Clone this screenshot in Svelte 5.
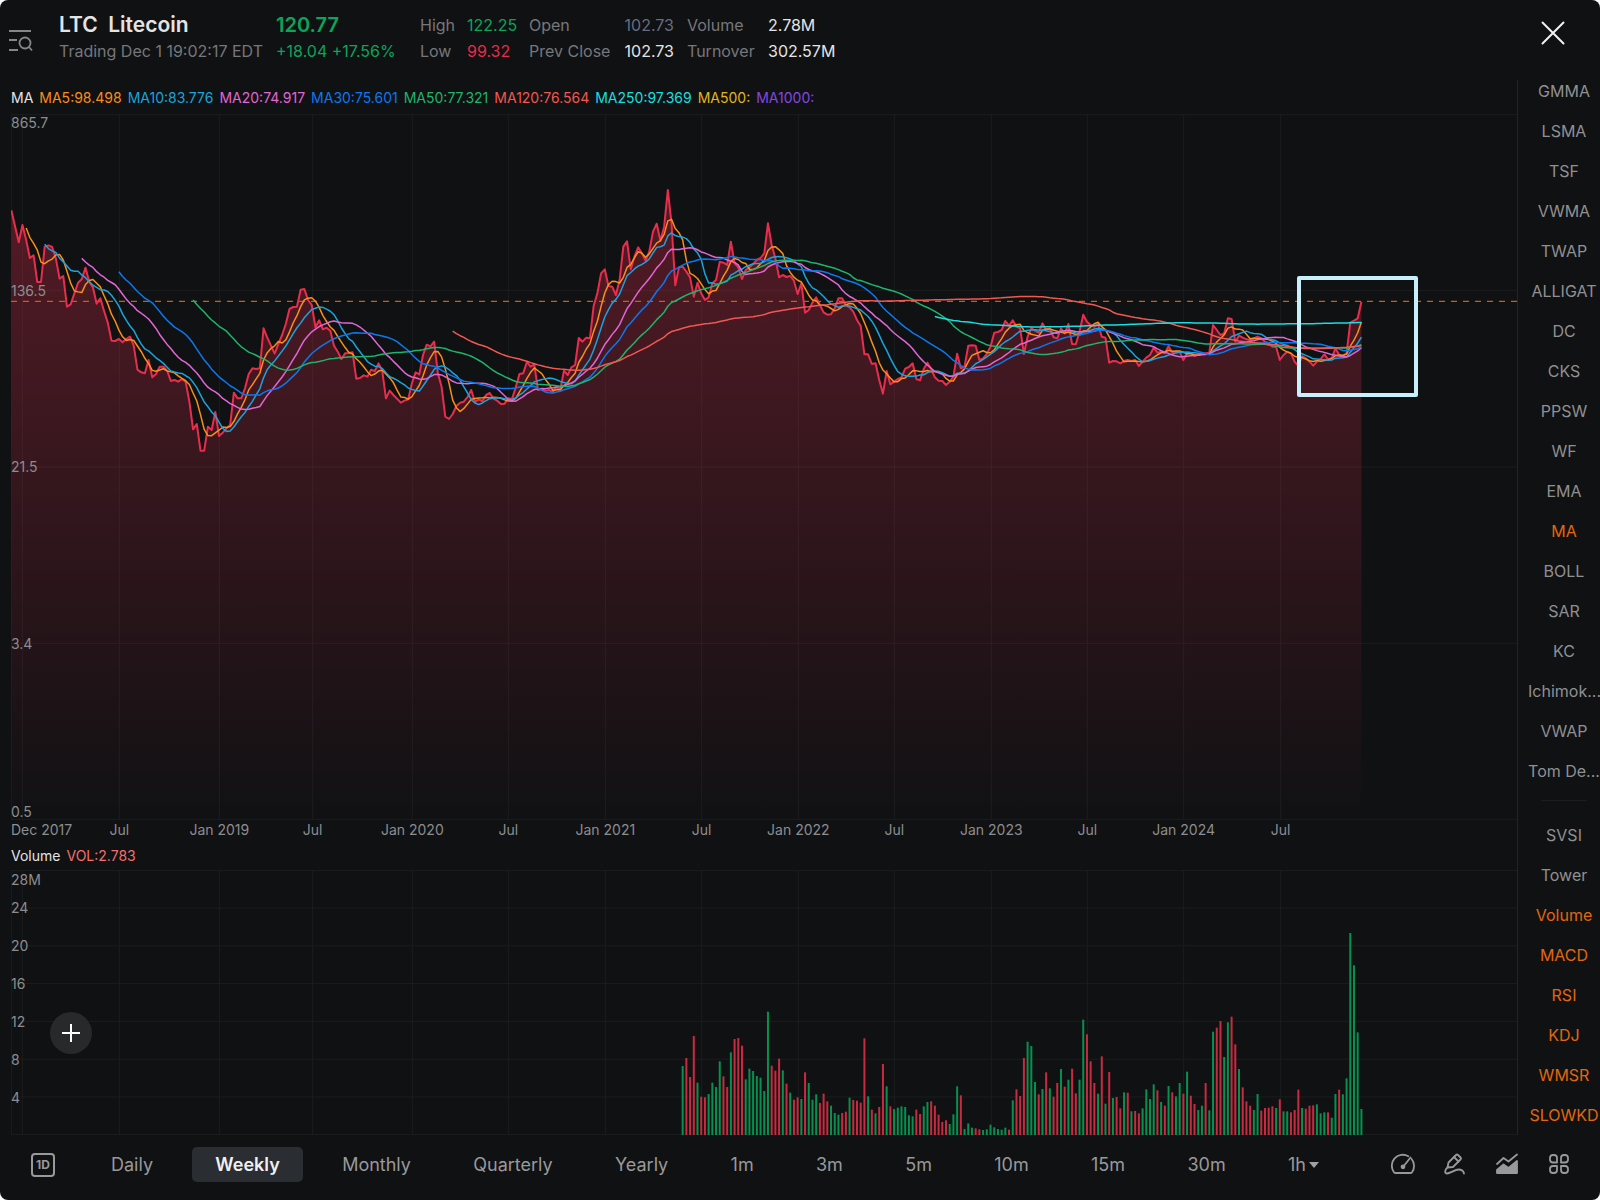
<script lang="ts">
	// Weekly closes, as levels on the log scale (0 is the top, 330 is 136.5)
	const levels = [
		91, 139, 187, 135, 180, 234, 226, 306, 306, 200, 196, 201, 235, 296, 288, 380, 373, 340, 308, 297,
		263, 305, 322, 371, 355, 393, 428, 482, 483, 477, 487, 477, 470, 497, 569, 577, 580, 540, 592, 582,
		560, 560, 572, 603, 600, 605, 597, 606, 665, 748, 732, 812, 812, 740, 750, 696, 768, 758, 745, 735,
		638, 655, 655, 625, 582, 565, 567, 565, 445, 473, 497, 521, 492, 465, 432, 387, 381, 380, 329, 327,
		360, 375, 442, 421, 448, 443, 452, 497, 515, 537, 520, 519, 517, 596, 594, 586, 590, 569, 573, 550,
		572, 655, 632, 645, 656, 668, 662, 658, 610, 577, 583, 525, 494, 499, 485, 580, 620, 710, 717, 702,
		678, 668, 665, 651, 630, 666, 658, 663, 645, 639, 656, 662, 672, 671, 655, 657, 622, 582, 580, 546,
		560, 553, 630, 628, 632, 630, 636, 620, 630, 572, 585, 562, 555, 474, 485, 473, 475, 378, 340, 280,
		268, 318, 320, 345, 300, 200, 184, 268, 230, 202, 220, 242, 215, 155, 131, 182, 140, 30, 130, 316,
		262, 260, 275, 292, 350, 308, 340, 360, 352, 310, 300, 245, 248, 255, 185, 250, 262, 297, 270, 262,
		252, 240, 234, 220, 130, 195, 235, 292, 285, 291, 288, 302, 342, 310, 398, 390, 368, 352, 375, 397,
		404, 403, 385, 355, 355, 376, 382, 395, 420, 438, 523, 523, 552, 550, 600, 641, 573, 613, 605, 597,
		592, 566, 561, 550, 597, 601, 567, 548, 567, 592, 602, 603, 615, 605, 590, 521, 565, 560, 497, 496,
		497, 540, 535, 522, 500, 458, 456, 450, 423, 437, 421, 440, 445, 522, 470, 445, 452, 458, 430, 450,
		445, 472, 475, 445, 460, 432, 492, 493, 455, 404, 425, 435, 440, 432, 470, 473, 548, 543, 544, 550,
		543, 540, 543, 540, 558, 545, 533, 525, 503, 518, 515, 520, 498, 518, 515, 515, 540, 520, 518, 528,
		524, 520, 520, 518, 435, 450, 465, 460, 415, 417, 485, 467, 473, 478, 480, 475, 470, 475, 485, 490,
		500, 500, 540, 525, 515, 520, 545, 558, 528, 535, 545, 557, 545, 537, 523, 538, 535, 505, 525, 528,
		520, 428, 422, 415, 365,
	]

	// Weekly volume, negative for a week that closed lower
	const firstVolumeWeek = 181
	const volumes = [
		207, -231, -174, -297, 157, -115, -113, 123, 157, 144, 221, -176, -144, 248, -288, -291, -268, 167, 199,
		192, 177, 172, 132, 370, -208, -193, -229, 194, -154, 127, -106, -113, 108, -188, 156, 106, 122, -96,
		-124, -101, 88, 66, 61, -66, -70, 112, -105, -103, -97, -290, 116, -76, 65, -84, -213, 146, -86, 78,
		82, 86, 84, 59, 56, -76, -63, 86, 99, -101, -88, -61, -39, -44, 33, 62, 146, -119, 18, 35, 22, -20,
		-17, 15, 17, 31, 23, 18, 16, 22, -16, 104, -137, -117, -231, 280, 267, 159, -122, 138, -188, 140,
		-115, -156, 198, -145, 166, -199, -125, 166, 346, -302, -221, -156, 124, -236, 94, -189, 111, -114,
		-80, 128, -127, 71, -72, -65, 80, 137, 108, 152, -134, 99, -88, 147, -128, 116, 156, -124, 190, -118,
		-93, 75, 88, -156, 74, 310, -322, -342, 234, 338, -355, -272, 198, -143, -101, -88, 75, 123, -73, -81,
		-82, -86, 81, -107, 71, 71, -68, -75, -136, 81, -79, -88, -89, 92, 65, 68, -68, 52, 123, -136, 122,
		170, 606, 509, 308, 78,
	]

	const chartWidth = 4518
	const weekWidth = 11.127
	const xOf = (week: number) => 1 + week * weekWidth

	const toPrice = (level: number) => 136.5 * Math.exp((330 - level) / 287.4)
	const toLevel = (price: number) => 330 - 287.4 * Math.log(price / 136.5)
	const closes = levels.map(toPrice)

	function linePoints(values: number[], from = 0) {
		return values.map((v, i) => `${xOf(i + from).toFixed(1)},${v.toFixed(1)}`).join(" ")
	}

	function movingAverage(n: number) {
		let out: number[] = []
		for (let i = n - 1; i < closes.length; i++) {
			let sum = 0
			for (let j = i - n + 1; j <= i; j++) sum += closes[j]
			out.push(toLevel(sum / n))
		}
		return linePoints(out, n - 1)
	}

	const averages = [
		{ n: 5, value: "98.498", color: "#fb8d1a" },
		{ n: 10, value: "83.776", color: "#1ba3dc" },
		{ n: 20, value: "74.917", color: "#e066d6" },
		{ n: 30, value: "75.601", color: "#0b78f0" },
		{ n: 50, value: "77.321", color: "#1fb46c" },
		{ n: 120, value: "76.564", color: "#f25750" },
		{ n: 250, value: "97.369", color: "#18dfe0" },
		{ n: 500, value: "", color: "#e0b61c" },
		{ n: 1000, value: "", color: "#8547e0" },
	]

	const pricePoints = linePoints(levels)
	const areaPoints = `1,1920 ${pricePoints} ${xOf(levels.length - 1)},1920`

	const dates = [
		{ x: 34, label: "" },
		{ x: 325, label: "Jul" },
		{ x: 625, label: "Jan 2019" },
		{ x: 905, label: "Jul" },
		{ x: 1204, label: "Jan 2020" },
		{ x: 1492, label: "Jul" },
		{ x: 1783, label: "Jan 2021" },
		{ x: 2072, label: "Jul" },
		{ x: 2362, label: "Jan 2022" },
		{ x: 2650, label: "Jul" },
		{ x: 2941, label: "Jan 2023" },
		{ x: 3229, label: "Jul" },
		{ x: 3518, label: "Jan 2024" },
		{ x: 3809, label: "Jul" },
	]
	const priceTicks = ["136.5", "21.5", "3.4"]
	const volumeTicks = [24, 20, 16, 12, 8, 4]

	const overlays = [
		"GMMA", "LSMA", "TSF", "VWMA", "TWAP", "ALLIGAT", "DC", "CKS", "PPSW",
		"WF", "EMA", "MA", "BOLL", "SAR", "KC", "Ichimok...", "VWAP", "Tom De...",
	]
	const studies = ["SVSI", "Tower", "Volume", "MACD", "RSI", "KDJ", "WMSR", "SLOWKD"]
	let active = ["MA", "Volume", "MACD", "RSI", "KDJ", "WMSR", "SLOWKD"]

	function toggle(name: string) {
		active = active.includes(name) ? active.filter((a) => a != name) : [...active, name]
	}

	const periods = ["Daily", "Weekly", "Monthly", "Quarterly", "Yearly", "1m", "3m", "5m", "10m", "15m", "30m"]
	let period = "Weekly"
</script>

<div class="app">
	<header>
		<button class="icon-btn" aria-label="Search watchlist">
			<svg width="24" height="22" viewBox="0 0 24 22" fill="none" stroke="#85868a" stroke-width="1.8">
				<path d="M0 1H22M0 10H8M0 20H9M20 17L23 20.500" />
				<circle cx="16" cy="13" r="5.500" />
			</svg>
		</button>
		<div class="name">
			<h1>LTC&nbsp; Litecoin</h1>
			<p>Trading Dec 1 19:02:17 EDT</p>
		</div>
		<div class="last up">
			<strong>120.77</strong>
			<p>+18.04 +17.56%</p>
		</div>
		<div class="stats">
			<span>High</span><b class="up">122.25</b>
			<span>Open</span><b class="right flat">102.73</b>
			<span class="third">Volume</span><b>2.78M</b>
			<span>Low</span><b class="down">99.32</b>
			<span>Prev Close</span><b class="right">102.73</b>
			<span class="third">Turnover</span><b>302.57M</b>
		</div>
		<button class="icon-btn close" aria-label="Close">
			<svg width="24" height="24" viewBox="0 0 24 24" stroke="#f2f2f2" stroke-width="2" stroke-linecap="round">
				<path d="M1.500 1.500L22.500 22.500M22.500 1.500L1.500 22.500" />
			</svg>
		</button>
	</header>

	<div class="body">
		<main>
			<div class="legend top">
				<span>MA</span>
				{#each averages as ma}
					<span style="color: {ma.color}">MA{ma.n}:{ma.value}</span>
				{/each}
			</div>

			<div class="plot price">
				<svg viewBox="0 -198 {chartWidth} 2118" preserveAspectRatio="none">
					<defs>
						<linearGradient id="area" gradientUnits="userSpaceOnUse" x1="0" y1="30" x2="0" y2="1920">
							<stop offset="0" stop-color="#ee3050" stop-opacity="0.31" />
							<stop offset="1" stop-color="#ee3050" stop-opacity="0" />
						</linearGradient>
					</defs>
					<g class="grid">
						<path d="M1 -198V1920" />
						{#each dates as date}
							<path d="M{date.x} -198V1920" />
						{/each}
						{#each [-196, 331, 861, 1390, 1918] as y}
							<path d="M0 {y}H{chartWidth}" />
						{/each}
					</g>
					<polygon points={areaPoints} fill="url(#area)" />
					<path class="last-line" d="M0 364H{chartWidth}" />
					<polyline points={pricePoints} class="line close-line" />
					{#each averages as ma}
						{#if ma.n < closes.length}
							<polyline points={movingAverage(ma.n)} class="line" stroke={ma.color} />
						{/if}
					{/each}
					<rect class="marker" x="3864" y="294" width="351" height="351" />
				</svg>
				<div class="ticks price-ticks">
					<span class="highest">865.7</span>
					{#each priceTicks as tick, i}
						<span style="top: {(i + 1) * 25}%">{tick}</span>
					{/each}
					<span class="lowest">0.5</span>
				</div>
			</div>

			<div class="dates">
				<span class="first">Dec 2017</span>
				{#each dates as date}
					<span style="left: {(date.x / chartWidth) * 100}%">{date.label}</span>
				{/each}
			</div>

			<div class="legend">
				<span>Volume</span>
				<span class="vol">VOL:2.783</span>
			</div>

			<div class="plot volume">
				<svg viewBox="0 0 {chartWidth} 795" preserveAspectRatio="none">
					<g class="grid">
						<path d="M1 0V795" />
						{#each dates as date}
							<path d="M{date.x} 0V795" />
						{/each}
						{#each [0, 1, 2, 3, 4, 5, 6, 7] as row}
							<path d="M0 {1 + row * 113.3}H{chartWidth}" />
						{/each}
					</g>
					{#each volumes as v, i}
						<rect
							x={xOf(firstVolumeWeek + i) - 3}
							y={795 - Math.abs(v)}
							width="6"
							height={Math.abs(v)}
							fill={v > 0 ? "#06914f" : "#c92a40"}
						/>
					{/each}
				</svg>
				<div class="ticks volume-ticks">
					<span>28M</span>
					{#each volumeTicks as tick}
						<span>{tick}</span>
					{/each}
				</div>
				<button class="add" aria-label="Add indicator">
					<svg width="18" height="18" viewBox="0 0 18 18" stroke="#fff" stroke-width="2">
						<path d="M0 9H18M9 0V18" />
					</svg>
				</button>
			</div>
		</main>

		<aside>
			{#each overlays as name}
				<button class:on={active.includes(name)} on:click={() => toggle(name)}>{name}</button>
			{/each}
			<hr />
			{#each studies as name}
				<button class:on={active.includes(name)} on:click={() => toggle(name)}>{name}</button>
			{/each}
		</aside>
	</div>

	<footer>
		<button class="range">1D</button>
		<nav>
			{#each periods as p}
				<button class:selected={p == period} on:click={() => (period = p)}>{p}</button>
			{/each}
			<label class="hours">
				<select aria-label="Hourly period">
					<option>1h</option>
					<option>2h</option>
					<option>4h</option>
				</select>
				<svg width="10" height="6" viewBox="0 0 10 6" fill="#a0a1a3"><path d="M0 0H10L5 6Z" /></svg>
			</label>
		</nav>
		<div class="tools">
			<button class="icon-btn" aria-label="Market gauge">
				<svg width="24" height="24" viewBox="0 0 24 24">
					<path d="M17.300 3.200A11 11 0 0 0 3 19.300Q3.700 20 4.600 20H19.400Q20.300 20 21 19.300A11 11 0 0 0 20.600 6" />
					<path d="M12 14L19.500 4.500" />
					<circle cx="12" cy="13.800" r="1.500" fill="#98999b" />
				</svg>
			</button>
			<button class="icon-btn" aria-label="Draw">
				<svg width="24" height="24" viewBox="0 0 24 24">
					<path d="M4.500 14.500L5.500 9.500L13 2Q14 1 15 2L17.500 4.500Q18.500 5.500 17.500 6.500L10 14Z" />
					<path d="M11 4L15.500 8.500" />
					<path d="M4.500 14.500C1.500 17 1.500 20.500 4 20.500C7 20.500 12 16.500 15.500 16.500C18.500 16.500 20.500 18 21 20.500" />
				</svg>
			</button>
			<button class="icon-btn" aria-label="Chart type">
				<svg width="24" height="24" viewBox="0 0 24 24">
					<path d="M2 11L8.500 5L13.500 8.500L22 1.500" />
					<path d="M2 20V17L8.500 11.500L13.500 15L22 8V20Z" fill="#98999b" />
				</svg>
			</button>
			<button class="icon-btn" aria-label="More tools">
				<svg width="24" height="24" viewBox="0 0 24 24">
					<path d="M6 2H7Q10 2 10 5V9.500H6Q3 9.500 3 6.500V5Q3 2 6 2Z" />
					<path d="M18 2H17Q14 2 14 5V9.500H18Q21 9.500 21 6.500V5Q21 2 18 2Z" />
					<path d="M6 20H7Q10 20 10 17V13H6Q3 13 3 16V17Q3 20 6 20Z" />
					<path d="M18 20H17Q14 20 14 17V13H18Q21 13 21 16V17Q21 20 18 20Z" />
				</svg>
			</button>
		</div>
	</footer>
</div>

<style>
	:global(body) {
		margin: 0;
		background: #fff;
	}

	.app {
		min-height: 100vh;
		display: flex;
		flex-direction: column;
		box-sizing: border-box;
		overflow: hidden;
		border-radius: 8px;
		background: #101113;
		color: #e4e4e5;
		font-family: Inter, "Open Sans", sans-serif;
		font-size: 16px;
	}

	button,
	select {
		border: 0;
		padding: 0;
		background: none;
		color: inherit;
		font: inherit;
		cursor: pointer;
	}

	.icon-btn {
		display: flex;
	}

	.up {
		color: #0aa55a;
	}
	.down {
		color: #e62c46;
	}

	header {
		height: 60px;
		padding: 12px 35px 0 9px;
		display: flex;
		line-height: 26px;
	}
	header > .icon-btn {
		align-self: flex-start;
		margin-top: 18px;
	}
	header > .close {
		margin: 9px 0 0 auto;
	}

	.name {
		width: 217px;
		margin-left: 26px;
		white-space: nowrap;
	}
	.name h1 {
		margin: 0;
		font-size: 21px;
		font-weight: 600;
	}
	.name p,
	.last p {
		margin: 0;
	}
	.name p {
		color: #76777a;
	}

	.last {
		width: 144px;
		white-space: nowrap;
	}
	.last strong {
		display: block;
		font-size: 20px;
		font-weight: 600;
	}

	.stats {
		display: grid;
		grid-template-columns: 47px 62px 84px 61px 94px auto;
		grid-auto-rows: 26px;
		white-space: nowrap;
		color: #76777a;
	}
	.stats b {
		font-weight: 400;
		color: #e4e4e5;
	}
	.stats b.up {
		color: #0aa55a;
	}
	.stats b.down {
		color: #e62c46;
	}
	.stats b.flat {
		color: #666d80;
	}
	.stats .right {
		text-align: right;
	}
	.stats .third {
		padding-left: 13px;
	}

	.body {
		flex: 1;
		display: flex;
	}

	main {
		flex: 1;
		min-width: 0;
		margin-top: 8px;
		padding-left: 11px;
		border-right: 1px solid #232426;
	}

	.legend {
		height: 30px;
		display: flex;
		align-items: center;
		gap: 6px;
		font-size: 14px;
		white-space: nowrap;
	}
	.legend.top {
		height: 34px;
	}
	.legend .vol {
		color: #f06f6c;
	}

	.plot {
		position: relative;
	}
	.plot > svg {
		display: block;
		width: 100%;
		height: 100%;
	}
	.price {
		height: calc(100vh - 494px);
		min-height: 706px;
	}
	.volume {
		height: 265px;
	}

	.grid path {
		stroke: #1c1d1f;
		stroke-width: 1px;
		vector-effect: non-scaling-stroke;
	}

	.line {
		fill: none;
		stroke-width: 1.5px;
		stroke-linejoin: round;
		vector-effect: non-scaling-stroke;
	}
	.close-line {
		stroke: #e92d4c;
		stroke-width: 2px;
	}
	.last-line {
		stroke: #c9600f;
		stroke-width: 1.3px;
		stroke-dasharray: 6 6;
		vector-effect: non-scaling-stroke;
	}
	.marker {
		fill: none;
		stroke: #c8effc;
		stroke-width: 4px;
		stroke-linejoin: round;
		vector-effect: non-scaling-stroke;
	}

	.ticks {
		color: #8c8d8f;
		font-size: 14px;
		line-height: 16px;
	}
	.price-ticks span {
		position: absolute;
		left: 0;
		transform: translateY(-50%);
	}
	.price-ticks .highest {
		top: 1px;
		transform: none;
	}
	.price-ticks .lowest {
		bottom: 0;
		transform: none;
	}
	.volume-ticks {
		position: absolute;
		top: 2px;
		left: 0;
		display: flex;
		flex-direction: column;
		gap: 22px;
	}
	.volume-ticks span:first-child {
		margin-bottom: -10px;
	}

	.dates {
		position: relative;
		height: 20px;
		color: #8c8d8f;
		font-size: 14px;
		line-height: 20px;
		white-space: nowrap;
	}
	.dates span {
		position: absolute;
		transform: translateX(-50%);
	}
	.dates .first {
		left: 0;
		transform: none;
	}

	.add {
		position: absolute;
		left: 39px;
		bottom: 81px;
		width: 42px;
		height: 42px;
		display: grid;
		place-items: center;
		border-radius: 50%;
		background: #28292b;
	}

	aside {
		width: 82px;
		margin-top: -1px;
		padding-left: 10px;
		box-sizing: border-box;
		display: flex;
		flex-direction: column;
	}
	aside button {
		height: 40px;
		color: #8f9092;
		white-space: nowrap;
	}
	aside button.on {
		color: #e0670f;
	}
	aside hr {
		width: 46px;
		margin: 9px auto 14px;
		border: 0;
		border-top: 1px solid #1c1d1f;
	}

	footer {
		height: 65px;
		padding: 0 29px 6px 31px;
		box-sizing: border-box;
		display: flex;
		align-items: center;
		color: #98999b;
		font-size: 18px;
	}

	.range {
		width: 24px;
		height: 24px;
		border: 2px solid #98999b;
		border-radius: 4px;
		font-size: 12px;
		font-weight: 700;
		line-height: 20px;
	}

	nav {
		flex: 1;
		margin-left: 33px;
		display: flex;
		justify-content: space-between;
	}
	nav button,
	.hours {
		height: 35px;
		padding: 0 23px;
		border-radius: 5px;
	}
	nav .selected {
		background: #2a2d31;
		color: #f0f0f1;
		font-weight: 600;
	}
	.hours {
		padding-right: 20px;
		display: flex;
		align-items: center;
		gap: 3px;
	}
	.hours select {
		width: 18px;
		appearance: none;
	}

	.tools {
		margin-left: 52px;
		display: flex;
		gap: 28px;
	}
	.tools svg {
		fill: none;
		stroke: #98999b;
		stroke-width: 1.8;
		stroke-linecap: round;
		stroke-linejoin: round;
	}
</style>
